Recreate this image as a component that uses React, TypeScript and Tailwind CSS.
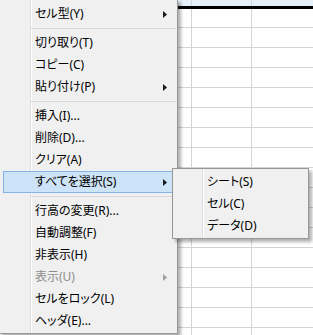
import { Fragment } from "react";

type Item =
  | { kind: "item"; label: string; sub?: boolean; disabled?: boolean; active?: boolean }
  | { kind: "sep" };

const MENU: Item[] = [
  { kind: "item", label: "セル型(Y)", sub: true },
  { kind: "sep" },
  { kind: "item", label: "切り取り(T)" },
  { kind: "item", label: "コピー(C)" },
  { kind: "item", label: "貼り付け(P)", sub: true },
  { kind: "sep" },
  { kind: "item", label: "挿入(I)..." },
  { kind: "item", label: "削除(D)..." },
  { kind: "item", label: "クリア(A)" },
  { kind: "item", label: "すべてを選択(S)", sub: true, active: true },
  { kind: "sep" },
  { kind: "item", label: "行高の変更(R)..." },
  { kind: "item", label: "自動調整(F)" },
  { kind: "item", label: "非表示(H)" },
  { kind: "item", label: "表示(U)", sub: true, disabled: true },
  { kind: "item", label: "セルをロック(L)" },
  { kind: "item", label: "ヘッダ(E)..." },
];

const SUB = ["シート(S)", "セル(C)", "データ(D)"];

const ROWS = Array.from({ length: 17 }, (_, i) => i);

function Arrow({ disabled }: { disabled?: boolean }) {
  return (
    <svg width="4" height="7" viewBox="0 0 4 7" className="ml-auto">
      <path d="M0 0 L4 3.5 L0 7 Z" fill={disabled ? "#a0a0a0" : "#1a1a1a"} />
    </svg>
  );
}

function Grid() {
  return (
    <div className="flex flex-col">
      <div className="flex h-[6px] bg-[#e5f0fb]">
        <div className="w-[192px] border-r border-[#c9d9ea]" />
        <div className="w-[60px] border-r border-[#c9d9ea]" />
        <div className="flex-1" />
      </div>
      <div className="h-[3px] bg-black" />
      {ROWS.map((r) => (
        <div
          key={r}
          className={`flex border-b border-[#d4d4d4] ${r === 0 ? "h-[19px]" : "h-[20px]"}`}
        >
          <div className="w-[192px] border-r border-[#d4d4d4]" />
          <div className="w-[60px] border-r border-[#d4d4d4]" />
          <div className="flex-1" />
        </div>
      ))}
    </div>
  );
}

export default function App() {
  return (
    <div
      className="relative h-[335px] w-[313px] overflow-hidden bg-white text-[12px] text-black [font-feature-settings:'palt']"
      style={{ fontFamily: '"Noto Sans", "Noto Sans CJK JP", sans-serif' }}
    >
      <Grid />

      {/* context menu */}
      <div className="absolute left-[-1px] top-[-1px] w-[179px] border border-[#979797] bg-[linear-gradient(to_right,#f0f0f0_30px,#dcdcdc_30px,#dcdcdc_31px,#ffffff_31px,#ffffff_32px,#f0f0f0_32px)] pb-[1px] pt-[3px] shadow-[3px_3px_3px_rgba(0,0,0,0.3)]">
        {MENU.map((it, i) => (
          <Fragment key={i}>
            {it.kind === "sep" ? (
              <div className="flex h-[7px] items-center">
                <div className="ml-[31px] mr-[1px] h-px flex-1 bg-[#d7d7d7]" />
              </div>
            ) : (
              <div
                className={`ml-[3px] mr-[4px] flex h-[22px] items-center border pl-[31px] pr-[5px] leading-none ${
                  it.active ? "border-[#84b5e8] bg-[#cde3f7]" : "border-transparent"
                } ${it.disabled ? "text-[#8d8d8d]" : ""}`}
              >
                <span className="whitespace-nowrap">{it.label}</span>
                {it.sub && <Arrow disabled={it.disabled} />}
              </div>
            )}
          </Fragment>
        ))}
      </div>

      {/* submenu */}
      <div className="absolute left-[172px] top-[168px] w-[137px] border border-[#979797] bg-[linear-gradient(to_right,#f0f0f0_29px,#dcdcdc_29px,#dcdcdc_30px,#ffffff_30px,#ffffff_31px,#f0f0f0_31px)] pb-[1px] pt-[2px] shadow-[3px_3px_3px_rgba(0,0,0,0.3)]">
        {SUB.map((s) => (
          <div key={s} className="flex h-[22px] items-center pl-[34px] leading-none">
            <span className="whitespace-nowrap">{s}</span>
          </div>
        ))}
      </div>
    </div>
  );
}
